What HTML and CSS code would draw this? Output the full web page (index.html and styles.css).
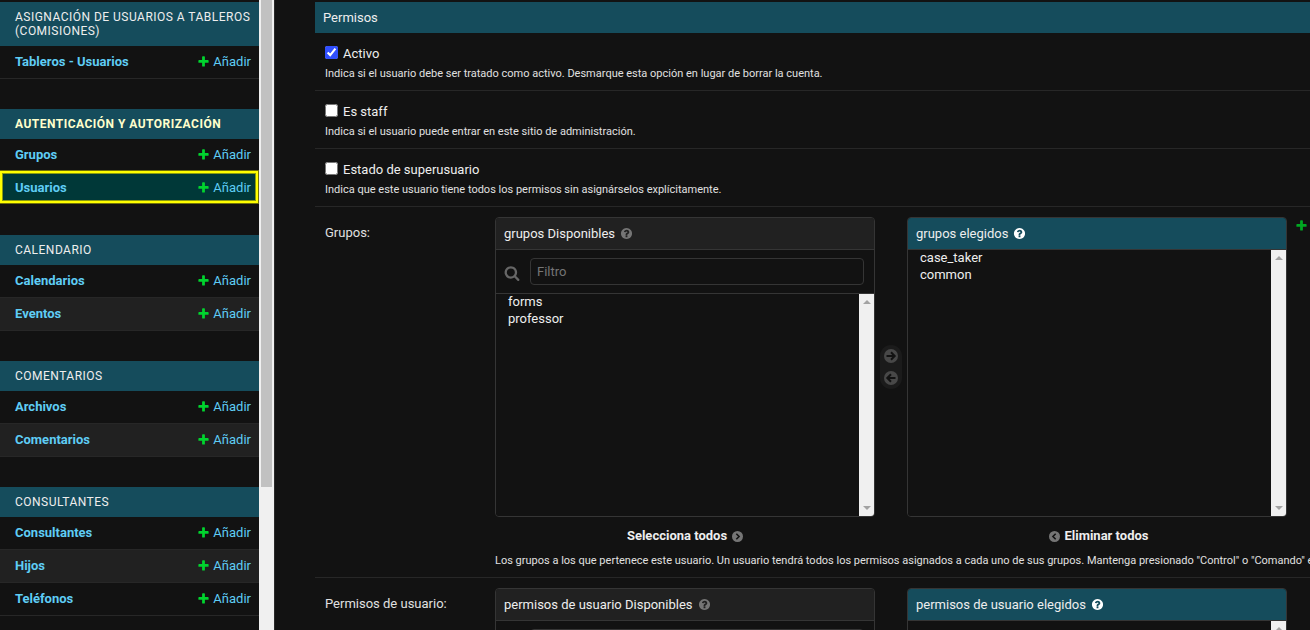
FILE: index.html
```html
<!DOCTYPE html>
<html lang="es">
<head>
<meta charset="utf-8">
<title>Modificar usuario</title>
<link rel="stylesheet" href="styles.css">
</head>
<body>
<svg class="symbols" aria-hidden="true">
  <symbol id="plus" viewBox="0 0 1792 1792"><path d="M1600 796v192q0 40-28 68t-68 28h-416v416q0 40-28 68t-68 28h-192q-40 0-68-28t-28-68v-416h-416q-40 0-68-28t-28-68v-192q0-40 28-68t68-28h416v-416q0-40 28-68t68-28h192q40 0 68 28t28 68v416h416q40 0 68 28t28 68z"/></symbol>
  <symbol id="help" viewBox="0 0 1792 1792"><path d="M1024 1376v-192q0-14-9-23t-23-9h-192q-14 0-23 9t-9 23v192q0 14 9 23t23 9h192q14 0 23-9t9-23zm256-672q0-88-55.5-163t-138.5-116-170-41q-243 0-371 213-15 24 8 42l132 100q7 6 19 6 16 0 25-12 53-68 86-92 34-24 86-24 48 0 85.5 26t37.5 59q0 38-20 61t-68 45q-63 28-115.5 86.5t-52.5 125.5v36q0 14 9 23t23 9h192q14 0 23-9t9-23q0-19 21.5-49.5t54.5-49.5q32-18 49-28.5t46-35 44.5-48 28-60.5 12.5-81zm384 192q0 209-103 385.5t-279.5 279.5-385.5 103-385.5-103-279.5-279.5-103-385.5 103-385.5 279.5-279.5 385.5-103 385.5 103 279.5 279.5 103 385.5z"/></symbol>
  <symbol id="search" viewBox="0 0 1792 1792"><path d="M1216 832q0-185-131.5-316.5t-316.5-131.5-316.5 131.5-131.5 316.5 131.5 316.5 316.5 131.5 316.5-131.5 131.5-316.5zm512 832q0 52-38 90t-90 38q-54 0-90-38l-343-342q-179 124-399 124-143 0-273.5-55.5t-225-150-150-225-55.5-273.5 55.5-273.5 150-225 225-150 273.5-55.5 273.5 55.5 225 150 150 225 55.5 273.5q0 220-124 399l343 343q37 37 37 90z"/></symbol>
  <symbol id="arrow-right" viewBox="0 0 14 14"><circle cx="7" cy="7" r="7"/><path class="cut" d="M2.5 7H10.5M7 3.3L10.7 7L7 10.7"/></symbol>
  <symbol id="arrow-left" viewBox="0 0 14 14"><circle cx="7" cy="7" r="7"/><path class="cut" d="M11.5 7H3.5M7 3.3L3.3 7L7 10.7"/></symbol>
  <symbol id="chevron-right" viewBox="0 0 14 14"><circle cx="7" cy="7" r="7"/><path class="cut" d="M5.5 3.5L9 7L5.5 10.5"/></symbol>
  <symbol id="chevron-left" viewBox="0 0 14 14"><circle cx="7" cy="7" r="7"/><path class="cut" d="M8.5 3.5L5 7L8.5 10.5"/></symbol>
</svg>
<div class="page">
  <nav class="sidebar" aria-label="Aplicaciones">
    <div class="apps">
      <section class="app">
        <h2>Asignación de usuarios a tableros (comisiones)</h2>
        <ul>
          <li><a class="model" href="#">Tableros - Usuarios</a><a class="add" href="#"><svg><use href="#plus"/></svg>Añadir</a></li>
        </ul>
      </section>
      <section class="app current-app">
        <h2>Autenticación y autorización</h2>
        <ul>
          <li><a class="model" href="#">Grupos</a><a class="add" href="#"><svg><use href="#plus"/></svg>Añadir</a></li>
          <li class="current"><a class="model" href="#">Usuarios</a><a class="add" href="#"><svg><use href="#plus"/></svg>Añadir</a></li>
        </ul>
      </section>
      <section class="app">
        <h2>Calendario</h2>
        <ul>
          <li><a class="model" href="#">Calendarios</a><a class="add" href="#"><svg><use href="#plus"/></svg>Añadir</a></li>
          <li><a class="model" href="#">Eventos</a><a class="add" href="#"><svg><use href="#plus"/></svg>Añadir</a></li>
        </ul>
      </section>
      <section class="app">
        <h2>Comentarios</h2>
        <ul>
          <li><a class="model" href="#">Archivos</a><a class="add" href="#"><svg><use href="#plus"/></svg>Añadir</a></li>
          <li><a class="model" href="#">Comentarios</a><a class="add" href="#"><svg><use href="#plus"/></svg>Añadir</a></li>
        </ul>
      </section>
      <section class="app">
        <h2>Consultantes</h2>
        <ul>
          <li><a class="model" href="#">Consultantes</a><a class="add" href="#"><svg><use href="#plus"/></svg>Añadir</a></li>
          <li><a class="model" href="#">Hijos</a><a class="add" href="#"><svg><use href="#plus"/></svg>Añadir</a></li>
          <li><a class="model" href="#">Teléfonos</a><a class="add" href="#"><svg><use href="#plus"/></svg>Añadir</a></li>
        </ul>
      </section>
    </div>
    <div class="page-scroll"><div class="thumb"></div></div>
  </nav>
  <main class="content">
    <h2 class="title">Permisos</h2>
    <div class="row">
      <div class="check"><input type="checkbox" id="active" checked><label for="active">Activo</label></div>
      <p class="help">Indica si el usuario debe ser tratado como activo. Desmarque esta opción en lugar de borrar la cuenta.</p>
    </div>
    <div class="row">
      <div class="check"><input type="checkbox" id="staff"><label for="staff">Es staff</label></div>
      <p class="help">Indica si el usuario puede entrar en este sitio de administración.</p>
    </div>
    <div class="row">
      <div class="check"><input type="checkbox" id="super"><label for="super">Estado de superusuario</label></div>
      <p class="help">Indica que este usuario tiene todos los permisos sin asignárselos explícitamente.</p>
    </div>
    <div class="row field">
      <label class="name" for="groups">Grupos:</label>
      <div class="control">
        <div class="related">
          <div class="selector">
            <div class="side">
              <div class="panel">
                <h3>grupos Disponibles<svg><use href="#help"/></svg></h3>
                <div class="filter"><label for="gfilter" aria-label="Filtro"><svg><use href="#search"/></svg></label><input type="text" id="gfilter" placeholder="Filtro"></div>
                <div class="list">
                  <select id="groups" multiple><option>forms</option><option>professor</option></select>
                  <div class="bar"><i class="up"></i><i class="down"></i></div>
                </div>
              </div>
              <a class="all" href="#">Selecciona todos<svg><use href="#chevron-right"/></svg></a>
            </div>
            <div class="chooser">
              <button type="button" aria-label="Elegir"><svg><use href="#arrow-right"/></svg></button>
              <button type="button" aria-label="Eliminar"><svg><use href="#arrow-left"/></svg></button>
            </div>
            <div class="side">
              <div class="panel chosen">
                <h3>grupos elegidos<svg><use href="#help"/></svg></h3>
                <div class="list">
                  <select multiple aria-label="grupos elegidos"><option>case_taker</option><option>common</option></select>
                  <div class="bar"><i class="up"></i><i class="down"></i></div>
                </div>
              </div>
              <a class="all clear" href="#"><svg><use href="#chevron-left"/></svg>Eliminar todos</a>
            </div>
          </div>
          <a class="add-related" href="#" aria-label="Añadir grupo"><svg><use href="#plus"/></svg></a>
        </div>
        <p class="help">Los grupos a los que pertenece este usuario. Un usuario tendrá todos los permisos asignados a cada uno de sus grupos. Mantenga presionado "Control" o "Comando" e</p>
      </div>
    </div>
    <div class="row field">
      <label class="name" for="perms">Permisos de usuario:</label>
      <div class="control">
        <div class="related">
          <div class="selector">
            <div class="side">
              <div class="panel">
                <h3>permisos de usuario Disponibles<svg><use href="#help"/></svg></h3>
                <div class="filter"><label for="pfilter" aria-label="Filtro"><svg><use href="#search"/></svg></label><input type="text" id="pfilter"></div>
                <div class="list">
                  <select id="perms" multiple></select>
                  <div class="bar"><i class="up"></i><i class="down"></i></div>
                </div>
              </div>
            </div>
            <div class="chooser"></div>
            <div class="side">
              <div class="panel chosen">
                <h3>permisos de usuario elegidos<svg><use href="#help"/></svg></h3>
                <div class="list">
                  <select multiple aria-label="permisos de usuario elegidos"></select>
                  <div class="bar"><i class="up"></i><i class="down"></i></div>
                </div>
              </div>
            </div>
          </div>
        </div>
      </div>
    </div>
  </main>
</div>
</body>
</html>
```
FILE: styles.css
```css
* { box-sizing: border-box; }
html, body { height: 100%; }
body {
  margin: 0;
  overflow: hidden;
  background: #121212;
  color: #eee;
  font: 13px/15px Roboto, "Liberation Sans", sans-serif;
}
h2, h3, p, ul { margin: 0; padding: 0; font-weight: 400; }
ul { list-style: none; }
a { color: #5fcdf5; text-decoration: none; }
svg { flex: none; fill: currentColor; }
.symbols { position: absolute; width: 0; height: 0; }
.cut { fill: none; stroke: #121212; stroke-width: 2; }

.page { display: flex; height: 100%; overflow: hidden; }

/* Sidebar */
.sidebar { display: flex; flex: 0 0 275px; border-right: 1px solid #2a2a2a; overflow: hidden; }
.apps { flex: 1; padding-top: 2px; }
.app { margin-bottom: 30px; }
.app h2 {
  padding: 8px 8px 8px 15px;
  background: #154c5c;
  font-size: 12px;
  line-height: 14px;
  letter-spacing: 0.04em;
  text-transform: uppercase;
}
.current-app h2 { color: #ffc; font-weight: 700; }
.app li {
  position: relative;
  display: flex;
  justify-content: space-between;
  padding: 8px 8px 9px 15px;
  border-bottom: 1px solid #272727;
}
.app li:nth-child(even) { background: #212121; }
.model { font-weight: 700; }
.add { display: flex; align-items: center; gap: 3px; }
.add svg { width: 13px; height: 13px; color: #00d42e; }
.app .current:nth-child(even) { background: #003838; border-color: #121212; }
.current::after {
  content: "";
  position: absolute;
  inset: -1px 1px 1px 0;
  border: 2px solid #ff0;
  outline: 1px solid #707008;
  box-shadow: inset 0 0 0 1px #8a9a10;
}
.page-scroll { flex: 0 0 15px; padding: 0 2px; background: #f0f0f0; }
.thumb { height: 487px; background: #c1c1c1; }

/* Form */
.content { flex: 1; min-width: 0; padding: 2px 0 0 40px; overflow: hidden; }
.title { padding: 8px; background: #154c5c; font-size: 13px; line-height: 15px; }
.row { padding: 10px 0 10px 10px; border-bottom: 1px solid #272727; }
.check { display: flex; align-items: center; gap: 5px; height: 20px; }
.check input { width: 13px; height: 13px; margin: 0 0 1px; accent-color: #304ffe; }
.help { font-size: 11px; line-height: 13px; white-space: nowrap; color: #e0e0e0; }
.check + .help { padding: 4px 0 0; }
.field { display: flex; }
.name { flex: 0 0 170px; padding-top: 8px; color: #e0e0e0; }
.control { flex: 1; min-width: 0; }
.related { display: flex; gap: 8px; }
.selector { display: flex; flex: 0 1 792px; min-width: 0; }
.side { display: flex; flex: 1; flex-direction: column; align-items: center; min-width: 0; }
.panel {
  display: flex;
  flex-direction: column;
  width: 100%;
  height: 300px;
  overflow: hidden;
  border: 1px solid #353535;
  border-radius: 4px;
}
.panel h3 {
  display: flex;
  align-items: center;
  gap: 5px;
  padding: 8px;
  background: #212121;
  border-bottom: 1px solid #353535;
  font-size: 13px;
  line-height: 15px;
}
.panel h3 svg { width: 13px; height: 13px; color: #757575; }
.chosen h3 { background: #154c5c; }
.chosen h3 svg { color: #fff; }
.filter { display: flex; gap: 10px; padding: 8px 10px 8px 8px; border-bottom: 1px solid #353535; }
.filter label { padding-top: 7px; height: 27px; }
.filter svg { display: block; width: 16px; height: 16px; color: #666; }
.filter input {
  flex: 1;
  min-width: 0;
  height: 27px;
  padding: 0 6px;
  background: #121212;
  border: 1px solid #353535;
  border-radius: 4px;
  color: #eee;
  font: inherit;
}
.filter input::placeholder { color: #757575; }
.list { display: flex; flex: 1; min-height: 0; }
.list select {
  flex: 1;
  min-width: 0;
  padding: 0 10px;
  overflow: hidden;
  background: #121212;
  border: 0;
  color: #eee;
  font: inherit;
}
.list option { min-height: 17px; padding: 0 2px 2px; }
.bar {
  display: flex;
  flex: 0 0 15px;
  flex-direction: column;
  justify-content: space-between;
  align-items: center;
  padding: 6px 0;
  background: #f0f0f0;
}
.up, .down { border: 4px solid transparent; }
.up { border-top: 0; border-bottom-color: #a3a3a3; }
.down { border-bottom: 0; border-top-color: #a3a3a3; }
.chooser {
  align-self: center;
  display: flex;
  flex-direction: column;
  gap: 8px;
  width: 22px;
  margin: 0 5px 37px;
  padding: 4px;
  border-radius: 11px;
  background: #1b1b1b;
}
.chooser:empty { visibility: hidden; }
.chooser button { padding: 0; border: 0; background: none; color: #484848; }
.chooser svg { display: block; width: 14px; height: 14px; }
.all { display: flex; align-items: center; gap: 5px; padding: 11px 0; color: #eee; font-weight: 700; }
.clear { gap: 4px; padding-left: 4px; }
.all svg { width: 11px; height: 11px; margin-top: 2px; color: #757575; }
.add-related { padding-top: 2px; color: #00a822; }
.add-related svg { display: block; width: 13px; height: 13px; }
```
